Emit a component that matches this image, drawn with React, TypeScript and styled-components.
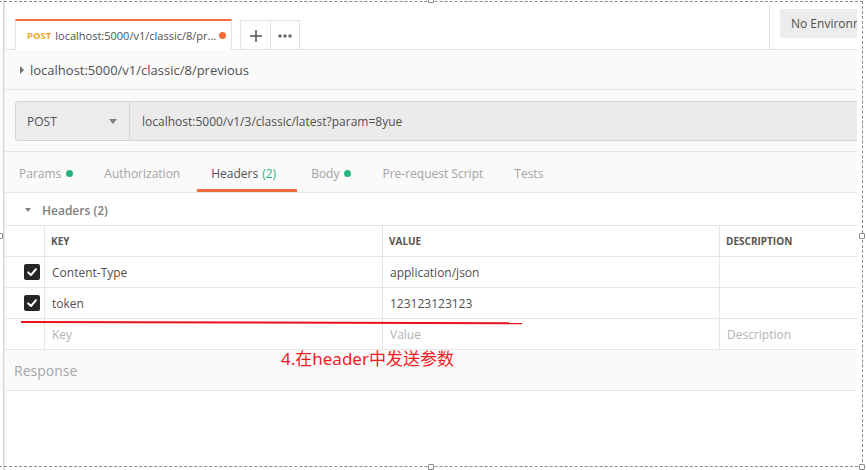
import React from "react";
import styled, { createGlobalStyle } from "styled-components";

const GlobalStyle = createGlobalStyle`
  html, body {
    margin: 0;
    padding: 0;
    background: #ffffff;
  }
  * {
    box-sizing: border-box;
  }
`;

const headerRows = [
  { key: "Content-Type", value: "application/json" },
  { key: "token", value: "123123123123" },
];

const requestTabs = [
  { label: "Params", dot: true },
  { label: "Authorization" },
  { label: "Headers", count: "(2)", active: true },
  { label: "Body", dot: true },
  { label: "Pre-request Script" },
  { label: "Tests" },
];

const CheckIcon: React.FC = () => (
  <svg width="12" height="12" viewBox="0 0 12 12">
    <polyline
      points="2.2,6.4 5,9 10,3.2"
      fill="none"
      stroke="#ffffff"
      strokeWidth="2"
      strokeLinecap="round"
      strokeLinejoin="round"
    />
  </svg>
);

const App: React.FC = (): React.ReactElement => {
  return (
    <>
      <GlobalStyle />
      <SFrame>
        <SLeftEdge />
        <SMain>
          <STabBar>
            <SActiveTab>
              <SMethodTag>POST</SMethodTag>
              <STabTitle>localhost:5000/v1/classic/8/pr...</STabTitle>
              <SUnsavedDot />
            </SActiveTab>
            <STabActions>
              <STabButton>
                <svg width="12" height="12" viewBox="0 0 12 12">
                  <path d="M6 0V12M0 6H12" stroke="#555" strokeWidth="1.6" />
                </svg>
              </STabButton>
              <STabButton $last>
                <svg width="14" height="4" viewBox="0 0 14 4">
                  <circle cx="2" cy="2" r="1.7" fill="#666" />
                  <circle cx="7" cy="2" r="1.7" fill="#666" />
                  <circle cx="12" cy="2" r="1.7" fill="#666" />
                </svg>
              </STabButton>
            </STabActions>
            <SSpacer />
            <SBarDivider />
            <SEnvButton>No Environment</SEnvButton>
          </STabBar>

          <SRequestName>
            <SCaretRight />
            <span>localhost:5000/v1/classic/8/previous</span>
          </SRequestName>

          <SUrlSection>
            <SUrlRow>
              <SMethodSelect>
                <span>POST</span>
                <SCaretDown />
              </SMethodSelect>
              <SUrlInput>localhost:5000/v1/3/classic/latest?param=8yue</SUrlInput>
            </SUrlRow>
          </SUrlSection>

          <SRequestTabs>
            {requestTabs.map((t) => (
              <SRequestTab key={t.label} $active={!!t.active}>
                {t.label}
                {t.count && <SCount>{t.count}</SCount>}
                {t.dot && <SGreenDot />}
              </SRequestTab>
            ))}
          </SRequestTabs>

          <SSectionTitle>
            <SCaretSmallDown />
            <span>Headers (2)</span>
          </SSectionTitle>

          <STable>
            <SRow>
              <SCell $first />
              <SHeadCell>KEY</SHeadCell>
              <SHeadCell>VALUE</SHeadCell>
              <SHeadCell>DESCRIPTION</SHeadCell>
            </SRow>
            {headerRows.map((r) => (
              <SRow key={r.key}>
                <SCell $first>
                  <SCheckbox>
                    <CheckIcon />
                  </SCheckbox>
                </SCell>
                <SCell>{r.key}</SCell>
                <SCell>{r.value}</SCell>
                <SCell />
              </SRow>
            ))}
            <SRow>
              <SCell $first />
              <SCell $placeholder>Key</SCell>
              <SCell $placeholder>Value</SCell>
              <SCell $placeholder>Description</SCell>
            </SRow>
          </STable>

          <SResponseBar>Response</SResponseBar>
        </SMain>

        <SSelection />
        <SHandle style={{ left: 428, top: -3 }} />
        <SHandle style={{ left: -3, top: 233 }} />
        <SHandle style={{ left: 859, top: 233 }} />
        <SHandle style={{ left: 428, top: 464 }} />
        <SHandle style={{ left: 859, top: 464 }} />

        <SMarkLine width="504" height="6" viewBox="0 0 504 6">
          <line x1="1" y1="2" x2="502" y2="3.2" stroke="#e8141c" strokeWidth="2" />
        </SMarkLine>
        <SNote>4.在header中发送参数</SNote>
      </SFrame>
    </>
  );
};

const SFrame = styled.div`
  position: relative;
  display: flex;
  width: 866px;
  height: 470px;
  overflow: hidden;
  background: #ffffff;
  font-family: "Open Sans", "Noto Sans", sans-serif;
  color: #505050;
`;

const SLeftEdge = styled.div`
  width: 5px;
  flex: none;
  background: linear-gradient(
    to right,
    #ffffff 0,
    #ffffff 3px,
    #d6d6d6 3px,
    #d6d6d6 4px,
    #ebebeb 4px
  );
`;

const SMain = styled.div`
  width: 852px;
  flex: none;
  display: flex;
  flex-direction: column;
  overflow: hidden;
`;

const STabBar = styled.div`
  display: flex;
  align-items: flex-end;
  height: 50px;
  padding-left: 10px;
  border-bottom: 1px solid #e4e4e4;
  background: #ffffff;
`;

const SActiveTab = styled.div`
  display: flex;
  align-items: center;
  width: 217px;
  height: 31px;
  margin-bottom: -1px;
  padding: 0 5px 0 11px;
  background: #ffffff;
  border-top: 2px solid #f26b3a;
  border-left: 1px solid #e2e2e2;
  border-right: 1px solid #e2e2e2;
`;

const SMethodTag = styled.span`
  font-size: 9.5px;
  font-weight: 700;
  color: #f5a623;
  margin-right: 4px;
`;

const STabTitle = styled.span`
  flex: 1;
  font-size: 11px;
  color: #505050;
  white-space: nowrap;
  overflow: hidden;
`;

const SUnsavedDot = styled.span`
  width: 7px;
  height: 7px;
  border-radius: 50%;
  background: #f26b3a;
  flex: none;
`;

const STabActions = styled.div`
  display: flex;
  margin-left: 8px;
  height: 30px;
  margin-bottom: -1px;
  border: 1px solid #e2e2e2;
  border-bottom: none;
`;

const STabButton = styled.div<{ $last?: boolean }>`
  display: flex;
  align-items: center;
  justify-content: center;
  width: ${(p) => (p.$last ? "28px" : "30px")};
  border-right: ${(p) => (p.$last ? "none" : "1px solid #e2e2e2")};
`;

const SSpacer = styled.div`
  flex: 1;
`;

const SBarDivider = styled.div`
  width: 1px;
  height: 44px;
  background: #e2e2e2;
`;

const SEnvButton = styled.div`
  align-self: flex-start;
  margin-top: 9px;
  margin-left: 10px;
  margin-right: -40px;
  width: 117px;
  height: 29px;
  flex: none;
  display: flex;
  align-items: center;
  padding-left: 11px;
  border-radius: 3px;
  background: #ececec;
  font-size: 12px;
  color: #505050;
  white-space: nowrap;
`;

const SRequestName = styled.div`
  display: flex;
  align-items: center;
  height: 40px;
  padding-left: 15px;
  background: #fafafa;
  border-bottom: 1px solid #e6e6e6;
  font-size: 13px;
  color: #505050;
`;

const SCaretRight = styled.span`
  width: 0;
  height: 0;
  margin-right: 6px;
  border-top: 4px solid transparent;
  border-bottom: 4px solid transparent;
  border-left: 4px solid #707070;
`;

const SUrlSection = styled.div`
  padding: 11px 0 10px 10px;
  background: #fafafa;
`;

const SUrlRow = styled.div`
  display: flex;
  height: 40px;
`;

const SMethodSelect = styled.div`
  display: flex;
  align-items: center;
  justify-content: space-between;
  width: 115px;
  padding: 0 12px 0 11px;
  background: #ececec;
  border: 1px solid #d4d4d4;
  border-radius: 3px 0 0 3px;
  font-size: 12px;
  color: #505050;
`;

const SCaretDown = styled.span`
  width: 0;
  height: 0;
  border-left: 4px solid transparent;
  border-right: 4px solid transparent;
  border-top: 5px solid #808080;
`;

const SUrlInput = styled.div`
  flex: 1;
  display: flex;
  align-items: center;
  padding-left: 12px;
  background: #ebebeb;
  border-top: 1px solid #d4d4d4;
  border-bottom: 1px solid #d4d4d4;
  font-size: 12px;
  color: #505050;
`;

const SRequestTabs = styled.div`
  display: flex;
  height: 42px;
  background: #fafafa;
  border-top: 1px solid #e6e6e6;
  border-bottom: 1px solid #e6e6e6;
`;

const SRequestTab = styled.div<{ $active: boolean }>`
  display: flex;
  align-items: center;
  height: 40px;
  padding: 6px ${(p) => (p.$active ? "21px" : "17px")} 0 14px;
  font-size: 12px;
  color: ${(p) => (p.$active ? "#505050" : "#a3a3a3")};
  border-bottom: 3px solid ${(p) => (p.$active ? "#f26b3a" : "transparent")};
  white-space: nowrap;
`;

const SCount = styled.span`
  margin-left: 4px;
  color: #26b47f;
`;

const SGreenDot = styled.span`
  width: 7px;
  height: 7px;
  margin-left: 5px;
  border-radius: 50%;
  background: #26b47f;
`;

const SSectionTitle = styled.div`
  display: flex;
  align-items: center;
  height: 32px;
  padding: 2px 0 0 20px;
  font-size: 12px;
  font-weight: 600;
  color: #808080;
`;

const SCaretSmallDown = styled.span`
  width: 0;
  height: 0;
  margin-right: 11px;
  border-left: 3.5px solid transparent;
  border-right: 3.5px solid transparent;
  border-top: 4px solid #808080;
`;

const STable = styled.div`
  border-top: 1px solid #e6e6e6;
`;

const SRow = styled.div`
  display: grid;
  grid-template-columns: 39px 338px 337px 1fr;
  height: 31px;
  border-bottom: 1px solid #e6e6e6;
`;

const SCell = styled.div<{ $first?: boolean; $placeholder?: boolean }>`
  display: flex;
  align-items: center;
  padding-left: ${(p) => (p.$first ? "19px" : "7px")};
  border-left: ${(p) => (p.$first ? "none" : "1px solid #e6e6e6")};
  font-size: 12px;
  color: ${(p) => (p.$placeholder ? "#b3b3b3" : "#505050")};
`;

const SHeadCell = styled(SCell)`
  padding-left: 6px;
  font-size: 10px;
  font-weight: 700;
  color: #555555;
`;

const SCheckbox = styled.div`
  display: flex;
  align-items: center;
  justify-content: center;
  width: 16px;
  height: 16px;
  border-radius: 2px;
  background: #262626;
`;

const SResponseBar = styled.div`
  display: flex;
  align-items: center;
  height: 41px;
  padding-left: 9px;
  background: #fafafa;
  border-bottom: 1px solid #e6e6e6;
  font-size: 14px;
  color: #a6a6a6;
`;

const SSelection = styled.div`
  position: absolute;
  left: -1px;
  top: 1px;
  width: 864px;
  height: 466px;
  border: 1px dashed #8c8c8c;
  pointer-events: none;
`;

const SHandle = styled.div`
  position: absolute;
  width: 6px;
  height: 6px;
  background: #ffffff;
  border: 1px solid #8c8c8c;
  border-radius: 1px;
`;

const SMarkLine = styled.svg`
  position: absolute;
  left: 20px;
  top: 320px;
`;

const SNote = styled.div`
  position: absolute;
  left: 281px;
  top: 348px;
  font-family: "Noto Sans", "Noto Sans CJK SC", sans-serif;
  font-size: 17px;
  line-height: 22px;
  color: #f01c24;
  white-space: nowrap;
`;

export default App;
